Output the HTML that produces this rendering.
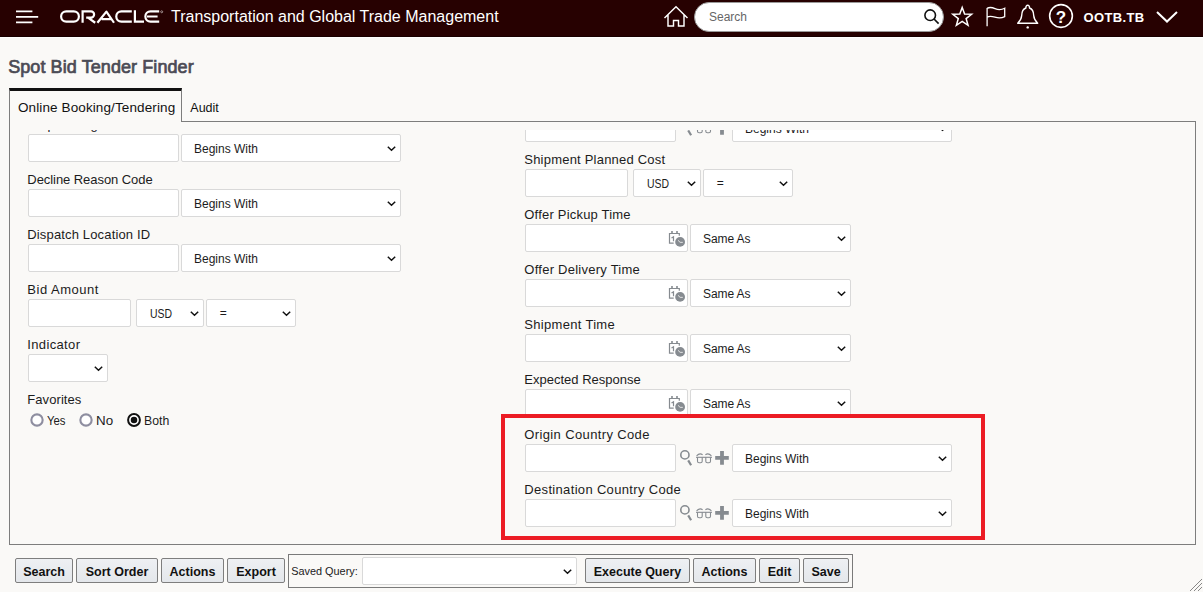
<!DOCTYPE html>
<html><head><meta charset="utf-8"><title>Spot Bid Tender Finder</title>
<style>
*{box-sizing:border-box;margin:0;padding:0}
html,body{width:1203px;height:592px;overflow:hidden;background:#faf9f7;font-family:"Liberation Sans",sans-serif;color:#1a1a1a}
div,span{position:absolute;white-space:nowrap}
svg{position:absolute;overflow:visible}
#hdr{left:0;top:0;width:1203px;height:38px;background:#270101;border-bottom:1px solid #fff;box-shadow:inset 0 -1px 0 #190000}
#hdr .t{left:171px;top:7px;font-size:16px;color:#fff;line-height:20px}
#title{left:8.2px;top:55px;font-size:18px;font-weight:normal;color:#4b4b55;-webkit-text-stroke:0.7px #4b4b55;line-height:24px;letter-spacing:0.08px}
.lbl{font-size:13px;color:#1c1c1c;line-height:16px}
.inp{height:28px;background:#fff;border:1px solid #d9d9d9;border-radius:2px}
.sel{height:28px;background:#fff;border:1px solid #d9d9d9;border-radius:2px;font-size:12px;line-height:26px;color:#1c1c1c}
.sel span{left:12px;top:1px;transform-origin:0 50%}
.btn{top:558px;height:25px;background:linear-gradient(#eef0f3,#e4e7eb);border:1px solid #7e7e7e;border-radius:2px;font-size:12.5px;font-weight:bold;text-align:center;line-height:24px;padding-top:0.5px;color:#111}
#clip{left:10px;top:130px;width:1185px;height:414px;overflow:hidden}
</style></head><body>
<div id="hdr">
<svg width="24" height="16" style="left:16px;top:10px"><path d="M0 1.300H16.400M0 6.900H22.200M0 12.400H16.400" stroke="#fff" stroke-width="1.800" fill="none"/></svg>
<svg width="104" height="13" viewBox="0 0 104 12.500" style="left:60px;top:10.300px"><g fill="none" stroke="#fff" stroke-width="2.200"><rect x="1.100" y="1.100" width="17.800" height="10.300" rx="5.150"/><path d="M22.600 12.500 V1.100 H31 A3.100 3.100 0 0 1 31 7.300 H26.200 M28 7.300 L35.200 12.500"/><path d="M37.400 12.500 L46.400 1.400 L54 12.500 M41.600 8.900 H51" stroke-linejoin="round"/><path d="M71.800 1.100 H61.400 A5.150 5.150 0 0 0 61.400 11.400 H71.800"/><path d="M74.900 0 V11.400 H84"/><path d="M99.200 1.100 H90.500 A5.150 5.150 0 0 0 90.500 11.400 H99.200 M87 6.250 H97.600"/></g><circle cx="101.700" cy="1.500" r="1" fill="none" stroke="#fff" stroke-width="0.500"/></svg>
<div class="t">Transportation and Global Trade Management</div>
<svg width="26" height="24" viewBox="0 0 26 24" style="left:663px;top:5px"><path d="M1.500 13 L13 1.800 L24.500 13 M5 10 V20.900 H10.500 V15.400 H15.500 V20.900 H21 V10" fill="none" stroke="#fff" stroke-width="1.450" stroke-linejoin="miter"/></svg>
<div style="left:694px;top:2px;width:249.500px;height:29.500px;background:#fff;border-radius:15px;border:1px solid #9a9a9a"></div>
<div style="left:709px;top:9px;font-size:12px;line-height:16px;color:#666">Search</div>
<svg width="18" height="18" viewBox="0 0 18 18" style="left:922.800px;top:8.200px"><circle cx="7.200" cy="7.200" r="5.300" fill="none" stroke="#111" stroke-width="1.600"/><path d="M11 11 L15.600 15.600" stroke="#111" stroke-width="1.700" fill="none"/></svg>
<svg width="30" height="30" style="left:0;top:0"><path d="M962.20 7.40 L964.61 13.98 L971.62 14.24 L966.10 18.57 L968.02 25.31 L962.20 21.40 L956.38 25.31 L958.30 18.57 L952.78 14.24 L959.79 13.98 Z" fill="none" stroke="#fff" stroke-width="1.500" stroke-linejoin="miter"/></svg>
<svg width="22" height="22" viewBox="0 0 22 22" style="left:984.800px;top:6.800px"><path d="M2.100 0.900 V19.200 M2.100 1.300 C4 0.300 7 0.300 10 1.600 S16 3.200 19.700 1.200 V9.600 C16 11.600 13 11.200 10 10.200 S4 9 2.100 10.100" fill="none" stroke="#fff" stroke-width="1.300"/></svg>
<svg width="24" height="26" viewBox="0 0 24 26" style="left:1016.300px;top:3.500px"><path d="M9.900 4 C9.700 0.300 13.700 0.300 13.500 4 C16.900 5.200 17.600 8 17.700 11.500 C17.900 15 19.400 17 21.700 19.300 H1.700 C4 17 5.500 15 5.700 11.500 C5.800 8 6.500 5.200 9.900 4 Z" fill="none" stroke="#fff" stroke-width="1.400" stroke-linejoin="round"/><circle cx="11.700" cy="23.400" r="1.200" fill="#fff"/></svg>
<svg width="26" height="26" viewBox="0 0 26 26" style="left:1048.100px;top:3.400px"><circle cx="13" cy="13" r="11.350" fill="none" stroke="#fff" stroke-width="1.600"/><text x="13" y="20.300" text-anchor="middle" font-family="Liberation Sans" font-weight="bold" font-size="17" fill="#fff">?</text></svg>
<div style="left:1083.500px;top:8px;font-size:13px;font-weight:bold;line-height:20px;color:#fff;letter-spacing:0.350px">OOTB.TB</div>
<svg width="22" height="12" viewBox="0 0 22 12" style="left:1155.500px;top:11px"><path d="M1 1 L11 10.500 L21 1" fill="none" stroke="#fff" stroke-width="2"/></svg>
</div>
<div id="title">Spot Bid Tender Finder</div>
<div style="left:9px;top:121px;width:1187px;height:424px;border:1px solid #7d7d7d;border-top:none"></div>
<div style="left:181px;top:121px;width:1015px;height:1px;background:#7d7d7d"></div>
<div style="left:9px;top:88px;width:172.500px;height:34px;border:1px solid #7d7d7d;border-top:3px solid #111;border-bottom:none;background:#faf9f7"></div>
<div style="left:18px;top:99.800px;font-size:13.500px;line-height:16px;color:#111;letter-spacing:0.110px">Online Booking/Tendering</div>
<div style="left:190.300px;top:100px;font-size:12.500px;line-height:16px;color:#111">Audit</div>
<div id="clip">
<div class="lbl" style="left:17.3px;top:-13.2px;letter-spacing:0.2px">Stop Change Code</div>
<div class="inp" style="left:18px;top:4px;width:151px"></div>
<div class="sel" style="left:171px;top:4px;width:220px"><span style="left:12px;">Begins With</span><svg width="9" height="6" viewBox="0 0 9 6" style="right:4px;top:11.2px"><path d="M0.8 0.8 L4.5 4.3 L8.2 0.8" fill="none" stroke="#111" stroke-width="1.5"/></svg></div>
<div class="lbl" style="left:17.3px;top:41.8px;letter-spacing:-0.06px">Decline Reason Code</div>
<div class="inp" style="left:18px;top:59px;width:151px"></div>
<div class="sel" style="left:171px;top:59px;width:220px"><span style="left:12px;">Begins With</span><svg width="9" height="6" viewBox="0 0 9 6" style="right:4px;top:11.2px"><path d="M0.8 0.8 L4.5 4.3 L8.2 0.8" fill="none" stroke="#111" stroke-width="1.5"/></svg></div>
<div class="lbl" style="left:17.3px;top:96.8px;letter-spacing:0.15px">Dispatch Location ID</div>
<div class="inp" style="left:18px;top:114px;width:151px"></div>
<div class="sel" style="left:171px;top:114px;width:220px"><span style="left:12px;">Begins With</span><svg width="9" height="6" viewBox="0 0 9 6" style="right:4px;top:11.2px"><path d="M0.8 0.8 L4.5 4.3 L8.2 0.8" fill="none" stroke="#111" stroke-width="1.5"/></svg></div>
<div class="lbl" style="left:17.3px;top:151.8px;letter-spacing:0.51px">Bid Amount</div>
<div class="inp" style="left:18px;top:169px;width:103px"></div>
<div class="sel" style="left:126px;top:169px;width:68px"><span style="left:12.600px;transform:scaleX(0.87);">USD</span><svg width="9" height="6" viewBox="0 0 9 6" style="right:4px;top:11.2px"><path d="M0.8 0.8 L4.5 4.3 L8.2 0.8" fill="none" stroke="#111" stroke-width="1.5"/></svg></div>
<div class="sel" style="left:196px;top:169px;width:90px"><span style="left:12.700px;top:0;">=</span><svg width="9" height="6" viewBox="0 0 9 6" style="right:4px;top:11.2px"><path d="M0.8 0.8 L4.5 4.3 L8.2 0.8" fill="none" stroke="#111" stroke-width="1.5"/></svg></div>
<div class="lbl" style="left:17.3px;top:206.8px;letter-spacing:0.35px">Indicator</div>
<div class="sel" style="left:18px;top:224px;width:80px"><span style="left:12px;"></span><svg width="9" height="6" viewBox="0 0 9 6" style="right:4px;top:11.2px"><path d="M0.8 0.8 L4.5 4.3 L8.2 0.8" fill="none" stroke="#111" stroke-width="1.5"/></svg></div>
<div class="lbl" style="left:17.3px;top:261.8px;letter-spacing:0.07px">Favorites</div>
<svg width="16" height="16" style="left:19px;top:281.9px"><circle cx="8" cy="8" r="5.650" fill="#fff" stroke="#8e8ea0" stroke-width="2.100"/></svg>
<div class="lbl" style="left:36.8px;top:282.7px;font-size:12.500px;transform-origin:0 50%;transform:scaleX(0.91)">Yes</div>
<svg width="16" height="16" style="left:67.8px;top:281.9px"><circle cx="8" cy="8" r="5.650" fill="#fff" stroke="#8e8ea0" stroke-width="2.100"/></svg>
<div class="lbl" style="left:86.3px;top:282.7px;font-size:12.500px;transform-origin:0 50%;transform:scaleX(1.07)">No</div>
<svg width="16" height="16" style="left:116.1px;top:281.9px"><circle cx="8" cy="8" r="5.900" fill="#fff" stroke="#111" stroke-width="2"/><circle cx="8" cy="8" r="3.250" fill="#111"/></svg>
<div class="lbl" style="left:134px;top:282.7px;font-size:12.500px;transform-origin:0 50%;transform:scaleX(0.98)">Both</div>
<div class="inp" style="left:515px;top:-16px;width:151px"></div>
<svg width="12" height="16" viewBox="0 0 12 16" style="left:670px;top:-10px"><circle cx="4.900" cy="4.900" r="4.100" fill="none" stroke="#868b90" stroke-width="1.600"/><path d="M8.200 10.400 L11.100 15.200" stroke="#868b90" stroke-width="2.200" fill="none"/></svg>
<svg width="17" height="11" viewBox="0 0 17 11" style="left:686px;top:-7px"><g fill="none" stroke="#868b90" stroke-width="1.100"><path d="M0 4.300H16"/><path d="M1.500 4.300V8.200Q1.500 9.800 3.100 9.800H4.600Q6.200 9.800 6.200 8.200V4.300"/><path d="M9.800 4.300V8.200Q9.800 9.800 11.400 9.800H12.900Q14.500 9.800 14.500 8.200V4.300"/><path d="M0.600 2.900Q3.500 -0.400 6.600 1.700"/><path d="M15.400 2.900Q12.500 -0.400 9.400 1.700"/></g></svg>
<svg width="14" height="14" viewBox="0 0 14 14" style="left:705.2px;top:-8.8px"><path d="M7 0V13.800M0.200 6.900H13.800" stroke="#868b90" stroke-width="3.800" fill="none"/></svg>
<div class="sel" style="left:722px;top:-16px;width:220px"><span style="left:12px;">Begins With</span><svg width="9" height="6" viewBox="0 0 9 6" style="right:4px;top:11.2px"><path d="M0.8 0.8 L4.5 4.3 L8.2 0.8" fill="none" stroke="#111" stroke-width="1.5"/></svg></div>
<div class="lbl" style="left:514.3px;top:21.8px;letter-spacing:0.21px">Shipment Planned Cost</div>
<div class="inp" style="left:515px;top:39px;width:103px"></div>
<div class="sel" style="left:623px;top:39px;width:68px"><span style="left:12.600px;transform:scaleX(0.87);">USD</span><svg width="9" height="6" viewBox="0 0 9 6" style="right:4px;top:11.2px"><path d="M0.8 0.8 L4.5 4.3 L8.2 0.8" fill="none" stroke="#111" stroke-width="1.5"/></svg></div>
<div class="sel" style="left:693px;top:39px;width:90px"><span style="left:12.700px;top:0;">=</span><svg width="9" height="6" viewBox="0 0 9 6" style="right:4px;top:11.2px"><path d="M0.8 0.8 L4.5 4.3 L8.2 0.8" fill="none" stroke="#111" stroke-width="1.5"/></svg></div>
<div class="lbl" style="left:514.3px;top:76.8px;letter-spacing:0.2px">Offer Pickup Time</div>
<div class="inp" style="left:515px;top:94px;width:163px"></div>
<svg width="18" height="18" viewBox="0 0 18 18" style="left:658px;top:100px"><path d="M5.700 13.100 H1.500 V3.500 H11.300 V5.800" fill="none" stroke="#868b90" stroke-width="1.200"/><path d="M3.200 0.900H4.800V3.500H3.200ZM8.200 0.900H9.800V3.500H8.200Z" fill="#868b90"/><path d="M3.500 8.100 L5.500 6.900 V11.200" fill="none" stroke="#868b90" stroke-width="1.200"/><circle cx="12.100" cy="11.900" r="5.600" fill="#fff"/><circle cx="12.100" cy="11.900" r="4.900" fill="#868b90"/><path d="M10 10.300 L12.100 12.350 H14.800" stroke="#eee" stroke-width="0.900" fill="none"/></svg>
<div class="sel" style="left:680px;top:94px;width:161px"><span style="left:12px;letter-spacing:-0.08px;">Same As</span><svg width="9" height="6" viewBox="0 0 9 6" style="right:4px;top:11.2px"><path d="M0.8 0.8 L4.5 4.3 L8.2 0.8" fill="none" stroke="#111" stroke-width="1.5"/></svg></div>
<div class="lbl" style="left:514.3px;top:131.8px;letter-spacing:0.25px">Offer Delivery Time</div>
<div class="inp" style="left:515px;top:149px;width:163px"></div>
<svg width="18" height="18" viewBox="0 0 18 18" style="left:658px;top:155px"><path d="M5.700 13.100 H1.500 V3.500 H11.300 V5.800" fill="none" stroke="#868b90" stroke-width="1.200"/><path d="M3.200 0.900H4.800V3.500H3.200ZM8.200 0.900H9.800V3.500H8.200Z" fill="#868b90"/><path d="M3.500 8.100 L5.500 6.900 V11.200" fill="none" stroke="#868b90" stroke-width="1.200"/><circle cx="12.100" cy="11.900" r="5.600" fill="#fff"/><circle cx="12.100" cy="11.900" r="4.900" fill="#868b90"/><path d="M10 10.300 L12.100 12.350 H14.800" stroke="#eee" stroke-width="0.900" fill="none"/></svg>
<div class="sel" style="left:680px;top:149px;width:161px"><span style="left:12px;letter-spacing:-0.08px;">Same As</span><svg width="9" height="6" viewBox="0 0 9 6" style="right:4px;top:11.2px"><path d="M0.8 0.8 L4.5 4.3 L8.2 0.8" fill="none" stroke="#111" stroke-width="1.5"/></svg></div>
<div class="lbl" style="left:514.3px;top:186.8px;letter-spacing:0.31px">Shipment Time</div>
<div class="inp" style="left:515px;top:204px;width:163px"></div>
<svg width="18" height="18" viewBox="0 0 18 18" style="left:658px;top:210px"><path d="M5.700 13.100 H1.500 V3.500 H11.300 V5.800" fill="none" stroke="#868b90" stroke-width="1.200"/><path d="M3.200 0.900H4.800V3.500H3.200ZM8.200 0.900H9.800V3.500H8.200Z" fill="#868b90"/><path d="M3.500 8.100 L5.500 6.900 V11.200" fill="none" stroke="#868b90" stroke-width="1.200"/><circle cx="12.100" cy="11.900" r="5.600" fill="#fff"/><circle cx="12.100" cy="11.900" r="4.900" fill="#868b90"/><path d="M10 10.300 L12.100 12.350 H14.800" stroke="#eee" stroke-width="0.900" fill="none"/></svg>
<div class="sel" style="left:680px;top:204px;width:161px"><span style="left:12px;letter-spacing:-0.08px;">Same As</span><svg width="9" height="6" viewBox="0 0 9 6" style="right:4px;top:11.2px"><path d="M0.8 0.8 L4.5 4.3 L8.2 0.8" fill="none" stroke="#111" stroke-width="1.5"/></svg></div>
<div class="lbl" style="left:514.3px;top:241.8px;letter-spacing:0.01px">Expected Response</div>
<div class="inp" style="left:515px;top:259px;width:163px"></div>
<svg width="18" height="18" viewBox="0 0 18 18" style="left:658px;top:265px"><path d="M5.700 13.100 H1.500 V3.500 H11.300 V5.800" fill="none" stroke="#868b90" stroke-width="1.200"/><path d="M3.200 0.900H4.800V3.500H3.200ZM8.200 0.900H9.800V3.500H8.200Z" fill="#868b90"/><path d="M3.500 8.100 L5.500 6.900 V11.200" fill="none" stroke="#868b90" stroke-width="1.200"/><circle cx="12.100" cy="11.900" r="5.600" fill="#fff"/><circle cx="12.100" cy="11.900" r="4.900" fill="#868b90"/><path d="M10 10.300 L12.100 12.350 H14.800" stroke="#eee" stroke-width="0.900" fill="none"/></svg>
<div class="sel" style="left:680px;top:259px;width:161px"><span style="left:12px;letter-spacing:-0.08px;">Same As</span><svg width="9" height="6" viewBox="0 0 9 6" style="right:4px;top:11.2px"><path d="M0.8 0.8 L4.5 4.3 L8.2 0.8" fill="none" stroke="#111" stroke-width="1.5"/></svg></div>
<div class="lbl" style="left:514.3px;top:296.8px;letter-spacing:0.37px">Origin Country Code</div>
<div class="inp" style="left:515px;top:314px;width:151px"></div>
<svg width="12" height="16" viewBox="0 0 12 16" style="left:670px;top:320px"><circle cx="4.900" cy="4.900" r="4.100" fill="none" stroke="#868b90" stroke-width="1.600"/><path d="M8.200 10.400 L11.100 15.200" stroke="#868b90" stroke-width="2.200" fill="none"/></svg>
<svg width="17" height="11" viewBox="0 0 17 11" style="left:686px;top:323px"><g fill="none" stroke="#868b90" stroke-width="1.100"><path d="M0 4.300H16"/><path d="M1.500 4.300V8.200Q1.500 9.800 3.100 9.800H4.600Q6.200 9.800 6.200 8.200V4.300"/><path d="M9.800 4.300V8.200Q9.800 9.800 11.400 9.800H12.900Q14.500 9.800 14.500 8.200V4.300"/><path d="M0.600 2.900Q3.500 -0.400 6.600 1.700"/><path d="M15.400 2.900Q12.500 -0.400 9.400 1.700"/></g></svg>
<svg width="14" height="14" viewBox="0 0 14 14" style="left:705.2px;top:321.2px"><path d="M7 0V13.800M0.200 6.900H13.800" stroke="#868b90" stroke-width="3.800" fill="none"/></svg>
<div class="sel" style="left:722px;top:314px;width:220px"><span style="left:12px;">Begins With</span><svg width="9" height="6" viewBox="0 0 9 6" style="right:4px;top:11.2px"><path d="M0.8 0.8 L4.5 4.3 L8.2 0.8" fill="none" stroke="#111" stroke-width="1.5"/></svg></div>
<div class="lbl" style="left:514.3px;top:351.8px;letter-spacing:0.33px">Destination Country Code</div>
<div class="inp" style="left:515px;top:369px;width:151px"></div>
<svg width="12" height="16" viewBox="0 0 12 16" style="left:670px;top:375px"><circle cx="4.900" cy="4.900" r="4.100" fill="none" stroke="#868b90" stroke-width="1.600"/><path d="M8.200 10.400 L11.100 15.200" stroke="#868b90" stroke-width="2.200" fill="none"/></svg>
<svg width="17" height="11" viewBox="0 0 17 11" style="left:686px;top:378px"><g fill="none" stroke="#868b90" stroke-width="1.100"><path d="M0 4.300H16"/><path d="M1.500 4.300V8.200Q1.500 9.800 3.100 9.800H4.600Q6.200 9.800 6.200 8.200V4.300"/><path d="M9.800 4.300V8.200Q9.800 9.800 11.400 9.800H12.900Q14.500 9.800 14.500 8.200V4.300"/><path d="M0.600 2.900Q3.500 -0.400 6.600 1.700"/><path d="M15.400 2.900Q12.500 -0.400 9.400 1.700"/></g></svg>
<svg width="14" height="14" viewBox="0 0 14 14" style="left:705.2px;top:376.2px"><path d="M7 0V13.800M0.200 6.900H13.800" stroke="#868b90" stroke-width="3.800" fill="none"/></svg>
<div class="sel" style="left:722px;top:369px;width:220px"><span style="left:12px;">Begins With</span><svg width="9" height="6" viewBox="0 0 9 6" style="right:4px;top:11.2px"><path d="M0.8 0.8 L4.5 4.3 L8.2 0.8" fill="none" stroke="#111" stroke-width="1.5"/></svg></div>
</div>
<div style="left:501px;top:414px;width:484px;height:126px;border:4px solid #ec1c24"></div>
<div class="btn" style="left:15px;width:58px">Search</div>
<div class="btn" style="left:76px;width:82px">Sort Order</div>
<div class="btn" style="left:161px;width:63px">Actions</div>
<div class="btn" style="left:227px;width:58px">Export</div>
<div style="left:288px;top:554px;width:565px;height:34px;border:1px solid #7a7a7a"></div>
<div style="left:291.200px;top:563px;font-size:10.900px;line-height:16px;color:#222">Saved Query:</div>
<div class="sel" style="left:362px;top:557px;width:215px"><span style="left:12px;"></span><svg width="9" height="6" viewBox="0 0 9 6" style="right:4px;top:11.2px"><path d="M0.8 0.8 L4.5 4.3 L8.2 0.8" fill="none" stroke="#111" stroke-width="1.5"/></svg></div>
<div class="btn" style="left:585px;width:105px">Execute Query</div>
<div class="btn" style="left:693px;width:63px">Actions</div>
<div class="btn" style="left:759px;width:41px">Edit</div>
<div class="btn" style="left:803px;width:46px">Save</div>
<svg width="14" height="14" style="left:1189px;top:578px"><path d="M1 13L13 1M5 13L13 5M9 13L13 9" stroke="#888" stroke-width="1" fill="none"/></svg>
</body></html>
